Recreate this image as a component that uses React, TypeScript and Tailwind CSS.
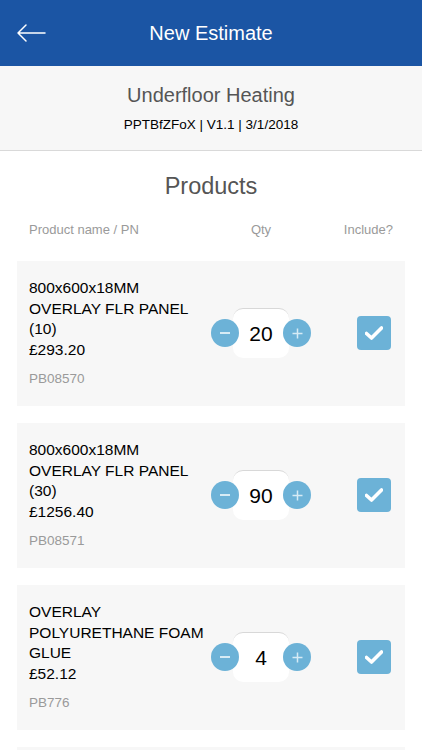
import React, { useState } from "react"

interface Product {
  id: string
  lines: string[]
  price: string
  qty: number
}

const initialProducts: Product[] = [
  { id: "PB08570", lines: ["800x600x18MM", "OVERLAY FLR PANEL", "(10)"], price: "£293.20", qty: 20 },
  { id: "PB08571", lines: ["800x600x18MM", "OVERLAY FLR PANEL", "(30)"], price: "£1256.40", qty: 90 },
  { id: "PB776", lines: ["OVERLAY", "POLYURETHANE FOAM", "GLUE"], price: "£52.12", qty: 4 },
  { id: "PB777", lines: ["OVERLAY", "TAPE"], price: "£12.00", qty: 2 },
]

function BackArrow() {
  return (
    <svg width="30" height="20" viewBox="0 0 30 20" fill="none">
      <path d="M29 10H2M10 2L2 10L10 18" stroke="white" strokeWidth="1.5" strokeLinecap="round" strokeLinejoin="round" />
    </svg>
  )
}

function QtyControl({ value, onChange }: { value: number; onChange: (v: number) => void }) {
  return (
    <div className="flex items-center w-[100px]">
      <button
        onClick={() => onChange(Math.max(0, value - 1))}
        className="relative z-10 w-[28px] h-[28px] rounded-full bg-[#6cb2d7] flex items-center justify-center"
      >
        <span className="block w-[10px] h-[1.5px] bg-[#d6ebf5]" />
      </button>
      <div className="-mx-[6px] w-[56px] h-[50px] bg-white rounded-[10px] border-t border-[#d8d8d8] flex items-center justify-center text-[21px] text-black">
        {value}
      </div>
      <button
        onClick={() => onChange(value + 1)}
        className="relative z-10 w-[28px] h-[28px] rounded-full bg-[#6cb2d7] flex items-center justify-center"
      >
        <svg width="11" height="11" viewBox="0 0 11 11">
          <path d="M5.5 0.5V10.5M0.5 5.5H10.5" stroke="#d6ebf5" strokeWidth="1.5" />
        </svg>
      </button>
    </div>
  )
}

function CheckBox({ checked, onToggle }: { checked: boolean; onToggle: () => void }) {
  return (
    <button
      onClick={onToggle}
      className="w-[34px] h-[34px] rounded-[4px] bg-[#6cb2d7] flex items-center justify-center"
    >
      {checked && (
        <svg width="18" height="14" viewBox="0 0 18 14">
          <path d="M1.5 7.5L6.5 12L16.5 2" stroke="white" strokeWidth="3.6" fill="none" strokeLinecap="round" strokeLinejoin="round" />
        </svg>
      )}
    </button>
  )
}

export default function App() {
  const [products, setProducts] = useState(initialProducts)
  const [included, setIncluded] = useState<Record<string, boolean>>(
    Object.fromEntries(initialProducts.map((p) => [p.id, true]))
  )

  const setQty = (id: string, qty: number) =>
    setProducts(products.map((p) => (p.id === id ? { ...p, qty } : p)))

  return (
    <div className="min-h-[750px] bg-white font-['Liberation_Sans',Arial,sans-serif]">
      {/* Header */}
      <div className="h-[66px] bg-[#1b55a4] flex items-center relative">
        <div className="absolute left-[16px] top-[23px]">
          <BackArrow />
        </div>
        <h1 className="w-full text-center text-white text-[20px]">New Estimate</h1>
      </div>

      {/* Estimate info */}
      <div className="h-[85px] bg-[#f7f7f7] border-b border-[#d9d9d9] flex flex-col items-center pt-[16px]">
        <div className="text-[20px] leading-[26px] text-[#555]">Underfloor Heating</div>
        <div className="mt-[8px] text-[13.5px] leading-[18px] text-black">PPTBfZFoX | V1.1 | 3/1/2018</div>
      </div>

      {/* Products */}
      <h2 className="mt-[20px] text-center text-[23.5px] leading-[30px] text-[#555]">Products</h2>

      <div className="mt-[21px] flex items-center text-[13px] leading-[16px] text-[#9a9a9a]">
        <div className="pl-[29px] w-[211px]">Product name / PN</div>
        <div className="w-[100px] text-center">Qty</div>
        <div className="flex-1 text-right pr-[29px]">Include?</div>
      </div>

      <div className="mt-[23px] flex flex-col gap-[17px]">
        {products.map((p) => (
          <div key={p.id} className="mx-[17px] bg-[#f7f7f7] flex items-center pl-[12px] pt-[17px] pb-[18px]">
            <div className="w-[182px] text-[15.5px] leading-[20.5px] text-black">
              {p.lines.map((l, i) => (
                <div key={i}>{l}</div>
              ))}
              <div>{p.price}</div>
              <div className="mt-[9px] text-[13.5px] leading-[19px] text-[#9a9a9a]">{p.id}</div>
            </div>
            <QtyControl value={p.qty} onChange={(v) => setQty(p.id, v)} />
            <div className="flex-1 flex justify-end pr-[14px]">
              <CheckBox
                checked={included[p.id]}
                onToggle={() => setIncluded({ ...included, [p.id]: !included[p.id] })}
              />
            </div>
          </div>
        ))}
      </div>
    </div>
  )
}
